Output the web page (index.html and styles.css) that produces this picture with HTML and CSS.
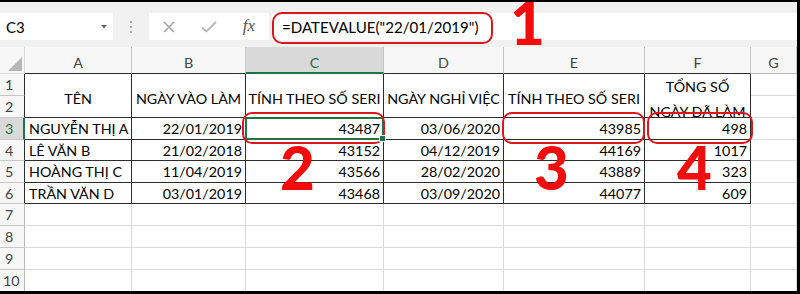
FILE: index.html
```html
<!DOCTYPE html>
<html>
<head>
	<meta charset="utf-8">
	<title>DATEVALUE</title>
	<link rel="stylesheet" href="styles.css">
</head>
<body>
	<div class="screen">
		<!-- formula bar -->
		<div class="formula-bar">
			<div class="name-box">
				<span>C3</span>
				<svg class="caret" width="6" height="4" viewBox="0 0 6 4"><path d="M0 0 L6 0 L3 3.5 Z"/></svg>
			</div>
			<div class="grip"><i></i><i></i><i></i></div>
			<div class="fx-tools">
				<svg width="14" height="12" viewBox="0 0 14 12" class="tool-x"><path d="M2 1 L12 11 M12 1 L2 11"/></svg>
				<svg width="16" height="12" viewBox="0 0 16 12" class="tool-ok"><path d="M1 6.5 L5.5 10.5 L15 1"/></svg>
				<span class="fx">fx</span>
			</div>
			<div class="formula">=DATEVALUE("22/01/2019")</div>
		</div>

		<!-- worksheet -->
		<div class="sheet">
			<div class="hd corner"><svg width="16" height="16" viewBox="0 0 16 16"><path d="M1 15 L15 1 L15 15 Z"/></svg></div>
			<div class="hd col top">A</div>
			<div class="hd col top">B</div>
			<div class="hd col top sel">C</div>
			<div class="hd col top">D</div>
			<div class="hd col top">E</div>
			<div class="hd col top">F</div>
			<div class="hd col">G</div>

			<div class="hd row edge">1</div>
			<div class="c t head span2">TÊN</div>
			<div class="c t head span2">NGÀY VÀO LÀM</div>
			<div class="c t head span2">TÍNH THEO SỐ SERI</div>
			<div class="c t head span2">NGÀY NGHỈ VIỆC</div>
			<div class="c t head span2">TÍNH THEO SỐ SERI</div>
			<div class="c t wrap span2">TỔNG SỐ<br>NGÀY ĐÃ LÀM</div>
			<div class="c"></div>

			<div class="hd row edge">2</div>
			<div class="c"></div>

			<div class="hd row edge sel">3</div>
			<div class="c t">NGUYỄN THỊ A</div>
			<div class="c t num">22/01/2019</div>
			<div class="c t num active">43487</div>
			<div class="c t num">03/06/2020</div>
			<div class="c t num">43985</div>
			<div class="c t num">498</div>
			<div class="c"></div>

			<div class="hd row edge">4</div>
			<div class="c t">LÊ VĂN B</div>
			<div class="c t num">21/02/2018</div>
			<div class="c t num">43152</div>
			<div class="c t num">04/12/2019</div>
			<div class="c t num">44169</div>
			<div class="c t num">1017</div>
			<div class="c"></div>

			<div class="hd row edge">5</div>
			<div class="c t">HOÀNG THỊ C</div>
			<div class="c t num">11/04/2019</div>
			<div class="c t num">43566</div>
			<div class="c t num">28/02/2020</div>
			<div class="c t num">43889</div>
			<div class="c t num">323</div>
			<div class="c"></div>

			<div class="hd row edge">6</div>
			<div class="c t">TRẦN VĂN D</div>
			<div class="c t num">03/01/2019</div>
			<div class="c t num">43468</div>
			<div class="c t num">03/09/2020</div>
			<div class="c t num">44077</div>
			<div class="c t num">609</div>
			<div class="c"></div>

			<div class="hd row">7</div>
			<div class="c"></div><div class="c"></div><div class="c"></div><div class="c"></div><div class="c"></div><div class="c"></div><div class="c"></div>
			<div class="hd row">8</div>
			<div class="c"></div><div class="c"></div><div class="c"></div><div class="c"></div><div class="c"></div><div class="c"></div><div class="c"></div>
			<div class="hd row">9</div>
			<div class="c"></div><div class="c"></div><div class="c"></div><div class="c"></div><div class="c"></div><div class="c"></div><div class="c"></div>
			<div class="hd row">10</div>
			<div class="c"></div><div class="c"></div><div class="c"></div><div class="c"></div><div class="c"></div><div class="c"></div><div class="c"></div>
		</div>

		<!-- red callouts -->
		<div class="ring ring-1"></div>
		<div class="ring ring-2"></div>
		<div class="ring ring-3"></div>
		<div class="ring ring-4"></div>
		<span class="step step-1">1</span>
		<span class="step step-2">2</span>
		<span class="step step-3">3</span>
		<span class="step step-4">4</span>
	</div>
</body>
</html>
```

FILE: styles.css
```css
html, body {
	margin: 0;
	padding: 0;
	background: #000;
}

.screen {
	position: relative;
	width: 797px;
	height: 289px;
	margin-top: 2px;
	background: #f1f1f1;
	overflow: hidden;
	font-family: "Lato", "Liberation Sans", sans-serif;
	font-size: 14.3px;
	color: #000;
}

/* formula bar */
.formula-bar {
	display: flex;
	align-items: flex-start;
	height: 45px;
	padding-top: 11px;
	box-sizing: border-box;
}
.name-box {
	position: relative;
	width: 113px;
	height: 27px;
	background: #fff;
	display: flex;
	align-items: center;
	padding-left: 6px;
	box-sizing: border-box;
	font-size: 15px;
}
.caret {
	position: absolute;
	left: 101px;
	top: 12px;
	fill: #666;
}
.grip {
	width: 36px;
	height: 27px;
	display: flex;
	flex-direction: column;
	align-items: center;
	justify-content: center;
	gap: 3px;
}
.grip i {
	width: 2px;
	height: 2px;
	background: #a8a8a8;
}
.fx-tools {
	width: 120px;
	height: 27px;
	background: #fff;
	display: grid;
	grid-template-columns: 40px 40px 40px;
	align-items: center;
	justify-items: center;
}
.fx-tools path {
	fill: none;
	stroke-width: 1.5;
}
.tool-x path {
	stroke: #a3a3a3;
}
.tool-ok path {
	stroke: #b9b9b9;
	stroke-width: 2;
}
.fx {
	font-family: "Liberation Serif", serif;
	font-style: italic;
	font-size: 17px;
	color: #555;
	margin-top: -2px;
}
.formula {
	flex: 1;
	margin-left: 3px;
	height: 27px;
	background: #fff;
	display: flex;
	align-items: center;
	padding-left: 10px;
	font-size: 15.1px;
}

/* worksheet grid */
.sheet {
	display: grid;
	grid-template-columns: 25px 107px 114px 138px 120px 141px 106px 46px;
	grid-template-rows: 27px 22px 22px 22px 21px 22px 21px 22px 22px 22px 22px;
	background: #fff;
}
.sheet > div {
	box-sizing: border-box;
	border-right: 1px solid #dadada;
	border-bottom: 1px solid #dadada;
	white-space: nowrap;
}

.hd {
	background: #f7f7f7;
	color: #444;
	display: flex;
	align-items: center;
	justify-content: center;
}
.hd.col {
	border-right-color: #c6c6c6;
	border-bottom-color: #b8b8b8;
	padding-top: 5px;
}
.hd.row {
	border-right-color: #b8b8b8;
	border-bottom-color: #c6c6c6;
	justify-content: flex-start;
	padding-left: 5px;
}
.hd.row:nth-last-child(8) {
	padding-left: 3px;
}
.corner {
	align-items: flex-end;
	justify-content: flex-end;
	padding: 0 1px 1px 0;
}
.corner svg {
	fill: #b6b6b6;
}
.hd.top {
	border-bottom-color: #2c2c2c;
}
.hd.edge {
	border-right-color: #2c2c2c;
}
.hd.sel {
	background: #d9d9d9;
	color: #1e6e43;
}
.hd.col.sel {
	border-bottom: 2px solid #217346;
}
.hd.row.sel {
	border-right: 2px solid #217346;
}

.c {
	display: flex;
	align-items: center;
	padding: 0 4px;
	overflow: hidden;
}
.c.t {
	border-right-color: #2c2c2c;
	border-bottom-color: #2c2c2c;
}
.span2 {
	grid-row: span 2;
}
.head {
	justify-content: center;
	padding-top: 5px;
}
.wrap {
	display: block;
	text-align: center;
	line-height: 25px;
	padding-top: 0;
}
.num {
	justify-content: flex-end;
	padding-right: 3px;
}
.active {
	position: relative;
	overflow: visible;
}
.active::after {
	content: "";
	position: absolute;
	left: -1px;
	top: -1px;
	right: -1px;
	bottom: -1px;
	border: 2px solid #217346;
}
.active::before {
	content: "";
	position: absolute;
	right: -3px;
	bottom: -3px;
	width: 5px;
	height: 5px;
	background: #217346;
	border: 1px solid #fff;
	z-index: 1;
}

/* red callouts */
.ring {
	position: absolute;
	border: 2.5px solid #dc161c;
	border-radius: 10px;
	box-sizing: border-box;
}
.ring-1 { left: 272px; top: 10px; width: 221px; height: 32px; }
.ring-2 { left: 242px; top: 110px; width: 143px; height: 32px; }
.ring-3 { left: 502px; top: 110px; width: 143px; height: 32px; }
.ring-4 { left: 647px; top: 110px; width: 106px; height: 32px; }

.step {
	position: absolute;
	font-family: "Lato", "Liberation Sans", sans-serif;
	font-weight: 900;
	font-size: 60px;
	line-height: 40px;
	color: #f40b0b;
}
.step-1 { left: 510px; top: 0; }
.step-2 { left: 280px; top: 145px; }
.step-3 { left: 534px; top: 145px; }
.step-4 { left: 677px; top: 145px; }
```
